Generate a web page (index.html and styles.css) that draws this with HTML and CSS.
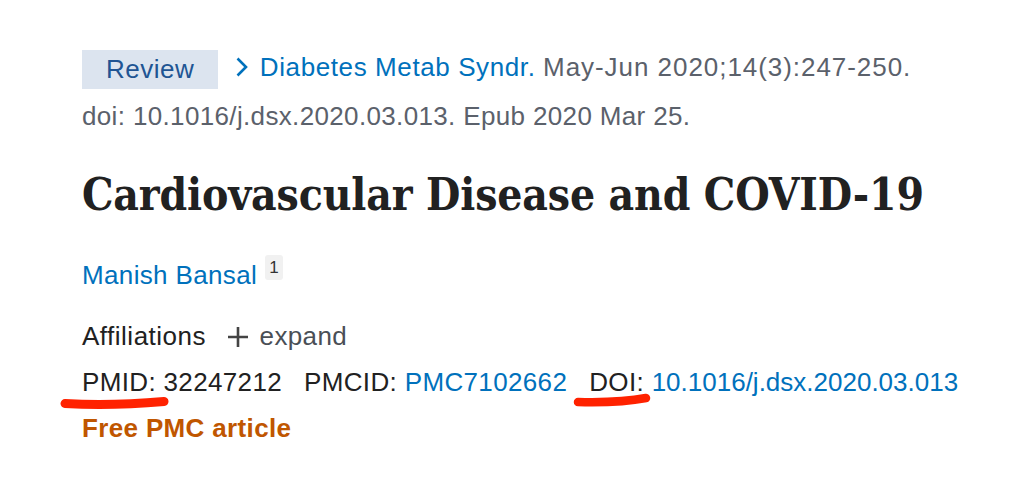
FILE: index.html
```html
<!DOCTYPE html>
<html lang="en">
<head>
<meta charset="utf-8">
<title>Cardiovascular Disease and COVID-19</title>
<link rel="stylesheet" href="styles.css">
</head>
<body>
<main class="article">
  <div class="citation">
    <span class="pubtype">Review</span>
    <span class="journal"><svg class="chev" width="14" height="20" viewBox="0 0 14 20"><path d="M2.5 1.5 L11 10 L2.5 18.5" fill="none" stroke="#0071bc" stroke-width="2.6"/></svg><a class="link" href="#">Diabetes Metab Syndr.</a></span>
    <span class="cit cit-date">May-Jun 2020;14(3):247-250.</span><br>
    <span class="cit">doi: 10.1016/j.dsx.2020.03.013. Epub 2020 Mar 25.</span>
  </div>
  <h1 class="title">Cardiovascular Disease and COVID-19</h1>
  <div class="authors">
    <a class="link" href="#">Manish Bansal</a><sup class="affnum">1</sup>
  </div>
  <div class="affiliations">
    <span class="afflabel">Affiliations</span>
    <span class="expand"><svg class="plus" width="20" height="20" viewBox="0 0 20 20"><path d="M10 0 V20 M0 10 H20" fill="none" stroke="#444" stroke-width="2.6"/></svg>expand</span>
  </div>
  <div class="ids">
    <span class="id pmid">PMID: <strong class="idval">32247212</strong>
      <svg class="mark mark-pmid" width="110" height="16" viewBox="0 0 110 16"><path d="M5 9.5 C 30 11, 70 10.5, 104 7.5" fill="none" stroke="#ff2200" stroke-width="9" stroke-linecap="round"/></svg>
    </span>
    <span class="id">PMCID: <a class="link" href="#">PMC7102662</a></span>
    <span class="id doi">DOI: <a class="link" href="#">10.1016/j.dsx.2020.03.013</a>
      <svg class="mark mark-doi" width="80" height="18" viewBox="0 0 80 18"><path d="M5 12 C 25 12.5, 55 11.5, 73 8" fill="none" stroke="#ff2200" stroke-width="8.5" stroke-linecap="round"/></svg>
    </span>
  </div>
  <div class="free">Free PMC article</div>
</main>
</body>
</html>
```
FILE: styles.css
```css
html, body {
  margin: 0;
  padding: 0;
  background: #ffffff;
}
body {
  font-family: "Liberation Sans", Arial, sans-serif;
  font-size: 26px;
  letter-spacing: 0.35px;
  color: #212121;
}
.article {
  padding: 43px 0 0 82px;
}
.link {
  color: #0071bc;
  text-decoration: none;
}
.citation {
  line-height: 49px;
  color: #5b616b;
}
.pubtype {
  display: inline-block;
  background: #dce4ef;
  color: #205493;
  line-height: 39px;
  padding: 0 24px;
  vertical-align: middle;
  margin-right: 9px;
  letter-spacing: 0.5px;
}
.journal {
  letter-spacing: 0.6px;
}
.cit-date {
  letter-spacing: 0.95px;
}
.chev {
  vertical-align: -1px;
  margin-right: 11px;
}
.title {
  font-family: "DejaVu Serif Condensed", "DejaVu Serif", serif;
  font-weight: bold;
  font-size: 44px;
  letter-spacing: -0.15px;
  line-height: 56px;
  margin: 26px 0 0 0;
  color: #212121;
}
.authors {
  margin-top: 32px;
  line-height: 40px;
}
.affnum {
  display: inline-block;
  font-size: 17px;
  line-height: 25px;
  width: 18px;
  text-align: center;
  letter-spacing: 0;
  background: #f1f1f1;
  color: #333;
  vertical-align: 11px;
  margin-left: 8px;
  border-radius: 3px;
}
.affiliations {
  margin-top: 21px;
  line-height: 40px;
}
.afflabel {
  letter-spacing: 0.5px;
}
.expand {
  color: #4a4f56;
  margin-left: 14px;
}
.plus {
  vertical-align: -2px;
  margin-right: 12px;
}
.ids {
  display: flex;
  gap: 22px;
  line-height: 44px;
  margin-top: 4px;
}
.id {
  position: relative;
}
.doi .link {
  letter-spacing: 0;
}
.idval {
  font-weight: normal;
}
.mark {
  position: absolute;
  pointer-events: none;
}
.mark-pmid {
  left: -22px;
  top: 34px;
}
.mark-doi {
  left: -16px;
  top: 30px;
}
.free {
  margin-top: 2px;
  line-height: 44px;
  font-weight: bold;
  color: #c05600;
}
```
